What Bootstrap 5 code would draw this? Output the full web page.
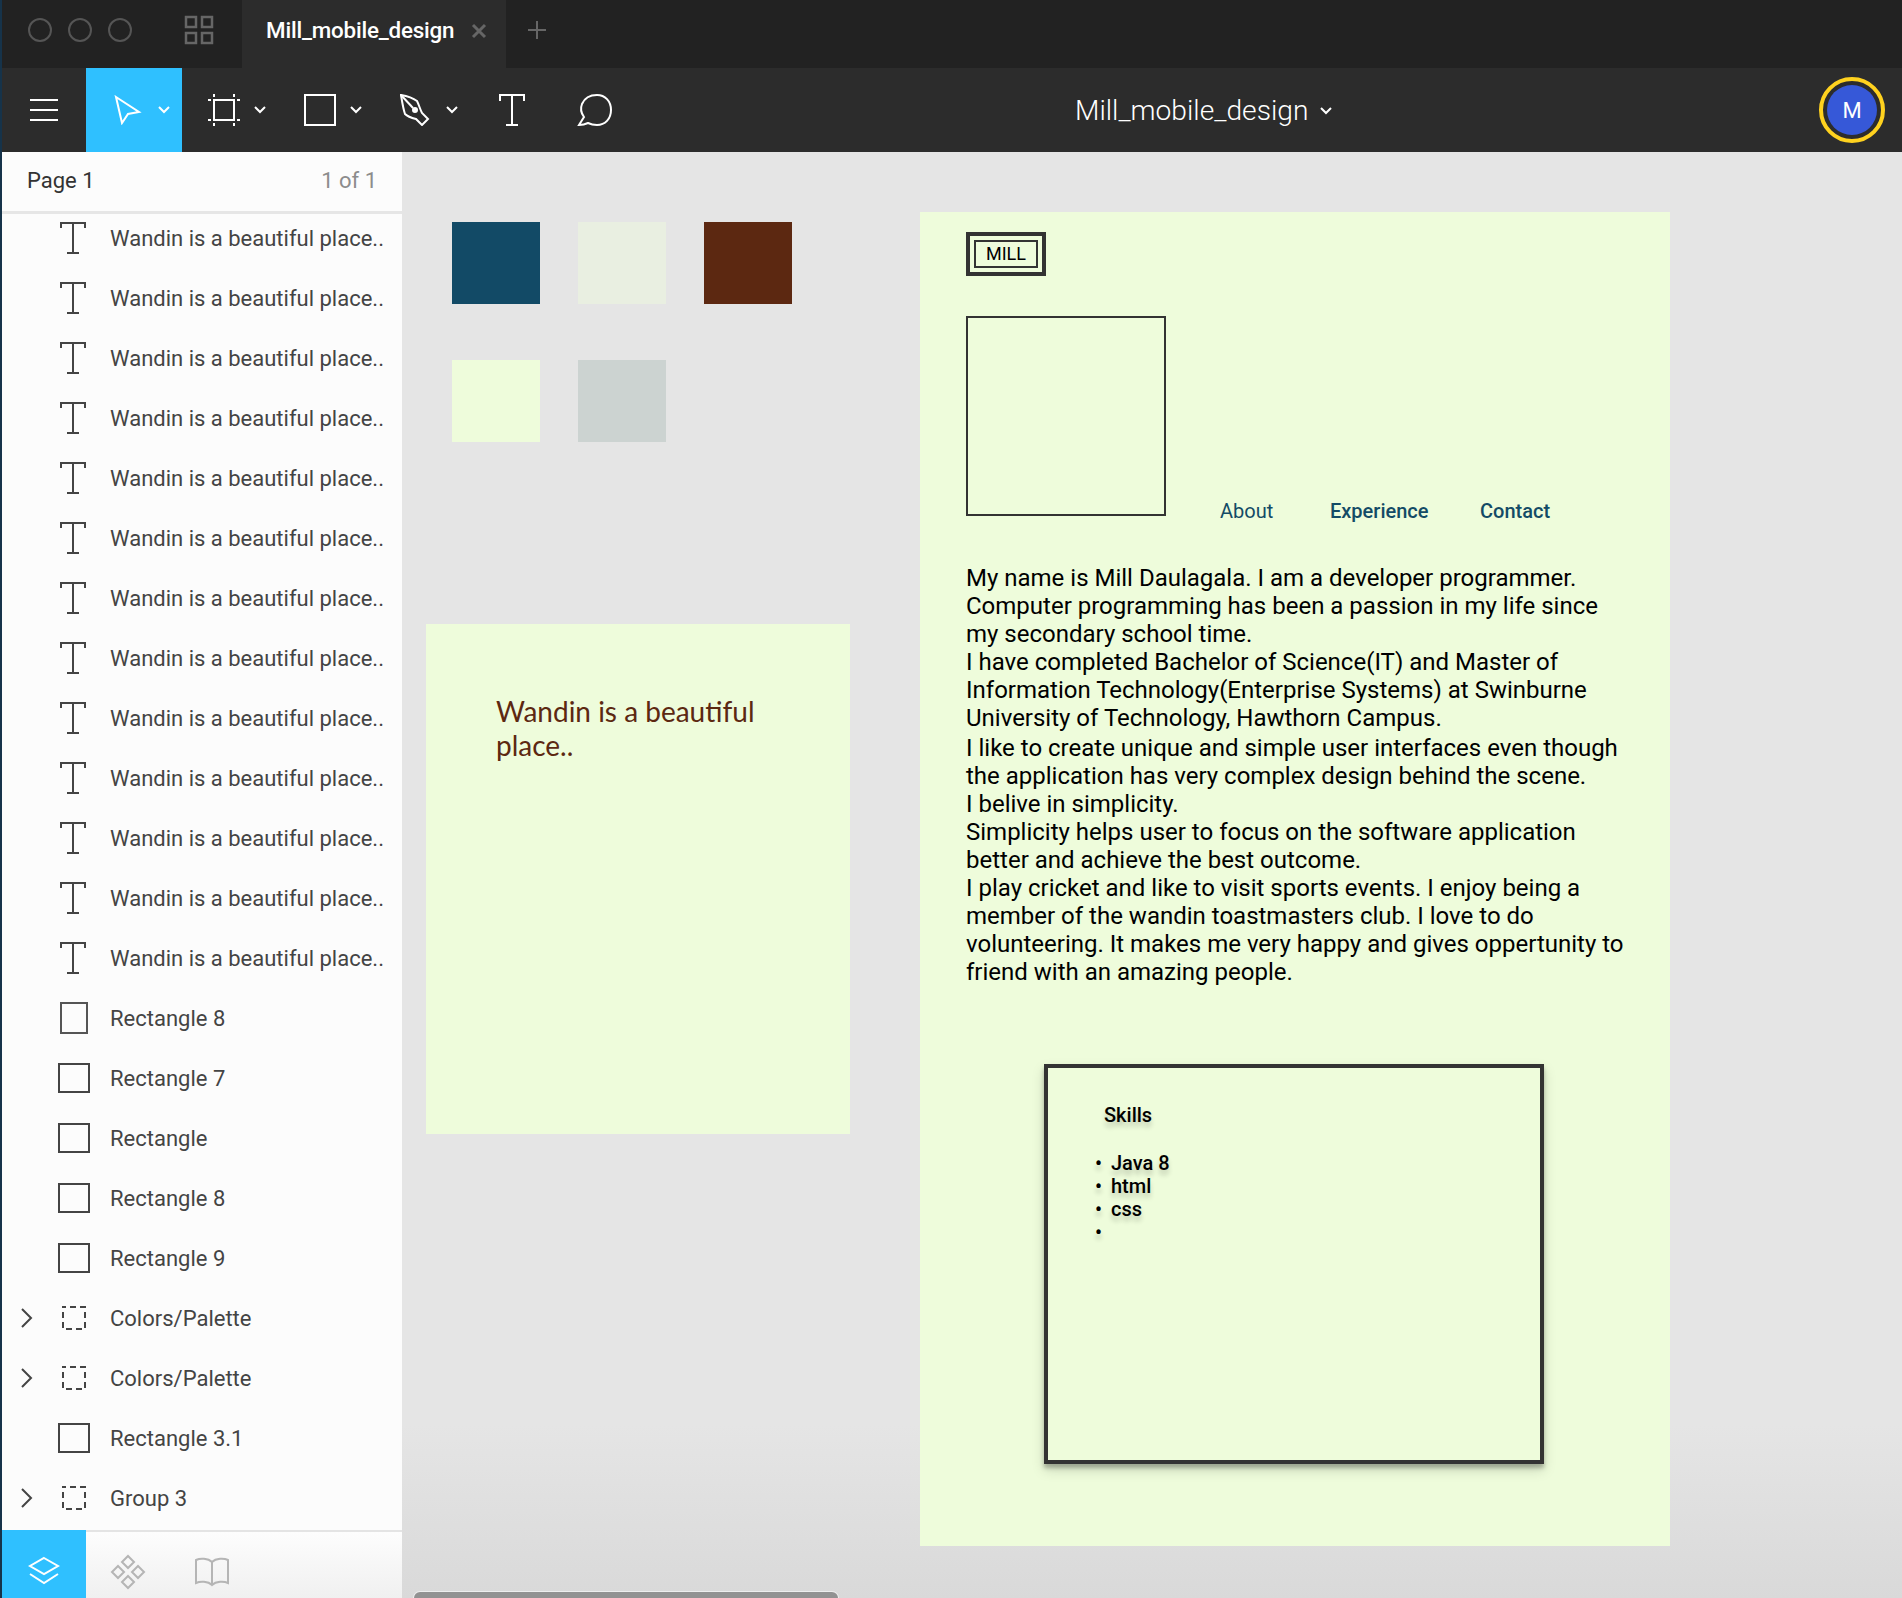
<!DOCTYPE html>
<html lang="en">
<head>
  <meta charset="UTF-8" />
  <title>Mill_mobile_design</title>
  <link href="https://cdn.jsdelivr.net/npm/bootstrap@5.3.2/dist/css/bootstrap.min.css" rel="stylesheet" />
  <style>
    html, body { height: 100%; }
    body { font-family: Roboto, sans-serif; background: #222; overflow: hidden; }
    svg { display: block; flex: none; }
    .app-shell { width: 1902px; height: 1598px; border-left: 2px solid #16334a; }

    .tab-strip { height: 68px; background: #222; }
    .lights { padding-left: 26px; width: 182px; gap: 16px; padding-bottom: 8px; }
    .grid-btn { width: 58px; padding-bottom: 8px; }
    .file-tab { width: 264px; background: #2c2c2c; padding: 0 0 6px 24px; color: #fff; font-size: 22.4px; font-weight: 500; letter-spacing: -.2px; }
    .file-tab svg { margin-left: 17px; }
    .add-tab { margin-left: 22px; margin-bottom: 8px; }

    .tool-bar { height: 84px; background: #2c2c2c; position: relative; }
    .tool-btn { height: 84px; }
    .menu-btn { width: 84px; padding-left: 28px; }
    .move-btn { width: 96px; background: #2fc0ff; padding-left: 28px; gap: 16px; }
    .tool-frame { margin-left: 26px; gap: 14px; }
    .tool-rect { margin-left: 38px; gap: 14px; }
    .tool-pen { margin-left: 38px; gap: 14px; }
    .tool-text { margin-left: 40px; }
    .tool-talk { margin-left: 51px; }
    .file-title { position: absolute; left: 1073px; top: 1px; height: 84px; color: #fff; font-size: 28.2px; font-weight: 300; gap: 12px; }
    .avatar-ring { position: absolute; right: 17px; top: 9px; width: 66px; height: 66px; border: 4px solid #ffd21f; border-radius: 50%; padding: 4px; }
    .avatar-dot { width: 100%; height: 100%; border-radius: 50%; background: #3658d8; color: #fff; font-size: 22px; }

    .work-area { height: 1446px; }
    .side-panel { width: 400px; background: #fcfcfc; color: #444; }
    .page-row { height: 62px; padding: 0 25px 2px 25px; border-bottom: 3px solid #e6e6e6; font-size: 22px; color: #333; }
    .page-count { color: #8c8c8c; }
    .layer-list { margin-top: -6px; }
    .layer-row { height: 60px; font-size: 22px; }
    .layer-caret { width: 56px; padding-left: 18px; }
    .layer-icon { width: 52px; }
    .icon-text { padding-left: 1px; }
    .icon-thin { padding-left: 2px; }
    .icon-dash { padding-left: 4px; }
    .side-tabs { height: 68px; border-top: 2px solid #e4e4e4; background: linear-gradient(#fdfdfd, #f0f0f0); }
    .side-tab { width: 84px; padding-top: 14px; }
    .side-tab-on { background: #2fc0ff; margin-top: -2px; }

    .canvas-area { background: linear-gradient(#e5e5e5 0, #e5e5e5 88%, #d9d9d9 100%); position: relative; overflow: hidden; }
    .swatch-group { position: absolute; left: 50px; top: 70px; display: grid; grid-template-columns: repeat(3, 88px); grid-auto-rows: 82px; gap: 56px 38px; }
    .swatch-item { width: 88px; }
    .note-frame { position: absolute; left: 24px; top: 472px; width: 424px; height: 510px; background: #eefcdb; padding: 70px 70px; color: #5c2811; font-family: Lato, sans-serif; font-size: 28px; line-height: 34px; }
    .page-frame { position: absolute; left: 518px; top: 60px; width: 750px; height: 1334px; background: #eefcdb; padding: 20px 46px; color: #000; }
    .logo-outer { width: 80px; height: 44px; border: 4px solid #333; padding: 4px; }
    .logo-inner { width: 100%; height: 100%; border: 2px solid #333; font-size: 18px; line-height: 1; }
    .hero-row { margin-top: 40px; }
    .photo-box { width: 200px; height: 200px; border: 2px solid #333; }
    .link-row { padding-left: 54px; color: #134b66; font-size: 20px; line-height: 24px; margin-bottom: -7px; }
    .link-row a { color: inherit; text-decoration: none; }
    .link-about { width: 110px; }
    .link-exp { font-weight: 500; width: 150px; }
    .link-contact { font-weight: 500; }
    .about-text { margin: 0; font-size: 24px; line-height: 28px; white-space: nowrap; }
    .about-first { margin-top: 48px; }
    .about-rest { margin-top: 2px; }
    .skills-box { margin: 78px 0 0 78px; width: 500px; height: 400px; border: 4px solid #333; box-shadow: 0 4px 4px rgba(0,0,0,.25), 0 6px 12px rgba(0,0,0,.15); padding: 35px 0 0 56px; font-size: 20px; font-weight: 500; text-shadow: 0 5px 5px rgba(0,0,0,.2); }
    .skills-title { line-height: 24px; }
    .skills-list { list-style: none; margin: 25px 0 0 -9px; padding: 0; font-size: 20px; line-height: 23px; }
    .skills-list li { padding-left: 16px; height: 23px; position: relative; }
    .skills-list li::before { content: "•"; position: absolute; left: 0; }
    .scroll-thumb { position: absolute; left: 12px; bottom: 0; width: 424px; height: 6px; background: #929292; border-radius: 6px 6px 0 0; box-shadow: 0 0 0 1px #eee; }
  </style>
</head>
<body>
  <div class="app-shell d-flex flex-column">

    <div class="tab-strip d-flex align-items-center">
      <div class="lights d-flex align-items-center">
        <svg width="24" height="24" fill="none" stroke="#555" stroke-width="2"><circle cx="12" cy="12" r="11"/></svg>
        <svg width="24" height="24" fill="none" stroke="#555" stroke-width="2"><circle cx="12" cy="12" r="11"/></svg>
        <svg width="24" height="24" fill="none" stroke="#555" stroke-width="2"><circle cx="12" cy="12" r="11"/></svg>
      </div>
      <div class="grid-btn d-flex">
        <svg width="30" height="30" fill="none" stroke="#666" stroke-width="2.5"><rect x="2" y="2" width="10" height="10"/><rect x="18" y="2" width="10" height="10"/><rect x="2" y="18" width="10" height="10"/><rect x="18" y="18" width="10" height="10"/></svg>
      </div>
      <div class="file-tab d-flex align-items-center align-self-stretch">
        <span>Mill_mobile_design</span>
        <svg width="16" height="16" stroke="#666" stroke-width="3"><path d="M2 2l12 12M14 2L2 14"/></svg>
      </div>
      <svg class="add-tab" width="18" height="18" stroke="#666" stroke-width="2"><path d="M9 0v18M0 9h18"/></svg>
    </div>

    <div class="tool-bar d-flex align-items-center">
      <div class="tool-btn menu-btn d-flex align-items-center">
        <svg width="30" height="24" stroke="#fff" stroke-width="2"><path d="M0 2h28M0 12h28M0 22h28"/></svg>
      </div>
      <div class="tool-btn move-btn d-flex align-items-center">
        <svg width="28" height="30" fill="none" stroke="#fff" stroke-width="2"><path d="M2 2l23 15-11 2-6 9z"/></svg>
        <svg width="12" height="8" fill="none" stroke="#fff" stroke-width="2"><path d="M1 1l5 5 5-5"/></svg>
      </div>
      <div class="tool-frame d-flex align-items-center">
        <svg width="32" height="32" fill="none" stroke="#fff" stroke-width="2"><rect x="6" y="6" width="20" height="20"/><path d="M0 6h3M29 6h3M0 26h3M29 26h3M6 0v3M26 0v3M6 29v3M26 29v3"/></svg>
        <svg width="12" height="8" fill="none" stroke="#fff" stroke-width="2"><path d="M1 1l5 5 5-5"/></svg>
      </div>
      <div class="tool-rect d-flex align-items-center">
        <svg width="32" height="32" fill="none" stroke="#fff" stroke-width="2"><rect x="1" y="1" width="30" height="30"/></svg>
        <svg width="12" height="8" fill="none" stroke="#fff" stroke-width="2"><path d="M1 1l5 5 5-5"/></svg>
      </div>
      <div class="tool-pen d-flex align-items-center">
        <svg width="32" height="32" fill="none" stroke="#fff" stroke-width="2"><path d="M1 1c6 1 12 3 16 6 2 4 3 8 5 12l6 6-6 6-6-6c-4-1-8-2-11-5C3 14 2 7 1 1z"/><path d="M1 1l12 13"/><circle cx="15" cy="16" r="2" fill="#fff"/></svg>
        <svg width="12" height="8" fill="none" stroke="#fff" stroke-width="2"><path d="M1 1l5 5 5-5"/></svg>
      </div>
      <svg class="tool-text" width="28" height="32" fill="none" stroke="#fff" stroke-width="2"><path d="M2 7V1h24v6M14 1v30M8 31h12"/></svg>
      <svg class="tool-talk" width="36" height="32" fill="none" stroke="#fff" stroke-width="2"><path d="M2 31l5-8C4 19 3 15 5 10 8 3 14 1 20 1c8 0 14 6 14 15s-6 15-14 15c-4 0-7-1-9-2-2 1-6 2-9 2z"/></svg>
      <div class="file-title d-flex align-items-center">
        <span>Mill_mobile_design</span>
        <svg width="12" height="8" fill="none" stroke="#fff" stroke-width="2"><path d="M1 1l5 5 5-5"/></svg>
      </div>
      <div class="avatar-ring">
        <div class="avatar-dot d-flex align-items-center justify-content-center">M</div>
      </div>
    </div>

    <div class="work-area d-flex">
      <aside class="side-panel d-flex flex-column">
        <div class="page-row d-flex align-items-center justify-content-between">
          <span>Page 1</span><span class="page-count">1 of 1</span>
        </div>
        <div class="layer-list flex-grow-1" id="layerList"></div>
        <div class="side-tabs d-flex">
          <div class="side-tab side-tab-on d-flex align-items-center justify-content-center">
            <svg width="32" height="30" fill="none" stroke="#fff" stroke-width="2"><path d="M16 2l14 8-14 8-14-8z"/><path d="M2 18l14 9 14-9"/></svg>
          </div>
          <div class="side-tab d-flex align-items-center justify-content-center">
            <svg width="36" height="36" fill="none" stroke="#b5b5b5" stroke-width="2"><path d="M18 2l6 6-6 6-6-6zM18 22l6 6-6 6-6-6zM8 12l6 6-6 6-6-6zM28 12l6 6-6 6-6-6z"/></svg>
          </div>
          <div class="side-tab d-flex align-items-center justify-content-center">
            <svg width="36" height="30" fill="none" stroke="#b5b5b5" stroke-width="2"><path d="M18 5C14 1 6 1 2 3v23c4-2 12-2 16 2 4-4 12-4 16-2V3c-4-2-12-2-16 2zM18 5v23"/></svg>
          </div>
        </div>
      </aside>

      <main class="canvas-area flex-grow-1">
        <div class="swatch-group">
          <div class="swatch-item" style="background:#124a66"></div>
          <div class="swatch-item" style="background:#e9efe1"></div>
          <div class="swatch-item" style="background:#5c2811"></div>
          <div class="swatch-item" style="background:#eefcdb"></div>
          <div class="swatch-item" style="background:#ccd3d1"></div>
        </div>

        <div class="note-frame">Wandin is a beautiful<br>place..</div>

        <section class="page-frame">
          <div class="logo-outer">
            <div class="logo-inner d-flex align-items-center justify-content-center">MILL</div>
          </div>
          <div class="hero-row d-flex align-items-end">
            <div class="photo-box"></div>
            <nav class="link-row d-flex">
              <a class="link-about" href="#">About</a>
              <a class="link-exp" href="#">Experience</a>
              <a class="link-contact" href="#">Contact</a>
            </nav>
          </div>
          <p class="about-text about-first">My name is Mill Daulagala. I am a developer programmer.<br>Computer programming has been a passion in my life since<br>my secondary school time.<br>I have completed Bachelor of Science(IT) and Master of<br>Information Technology(Enterprise Systems) at Swinburne<br>University of Technology, Hawthorn Campus.</p>
          <p class="about-text about-rest">I like to create unique and simple user interfaces even though<br>the application has very complex design behind the scene.<br>I belive in simplicity.<br>Simplicity helps user to focus on the software application<br>better and achieve the best outcome.<br>I play cricket and like to visit sports events. I enjoy being a<br>member of the wandin toastmasters club. I love to do<br>volunteering. It makes me very happy and gives oppertunity to<br>friend with an amazing people.</p>
          <div class="skills-box">
            <div class="skills-title">Skills</div>
            <ul class="skills-list">
              <li>Java 8</li>
              <li>html</li>
              <li>css</li>
              <li></li>
            </ul>
          </div>
        </section>

        <div class="scroll-thumb"></div>
      </main>
    </div>
  </div>

  <script src="https://cdn.jsdelivr.net/npm/bootstrap@5.3.2/dist/js/bootstrap.bundle.min.js"></script>
  <script>
    const tIcon = '<svg width="28" height="34" fill="none" stroke="#444" stroke-width="2"><path d="M2 7V2h24v5M14 2v30M8 32h12"/></svg>';
    const rectIcon = '<svg width="32" height="30" fill="none" stroke="#444" stroke-width="2"><rect x="1" y="1" width="30" height="28"/></svg>';
    const thinRect = '<svg width="28" height="32" fill="none" stroke="#555" stroke-width="2"><rect x="1" y="1" width="26" height="30"/></svg>';
    const groupIcon = '<svg width="24" height="24" fill="none" stroke="#444" stroke-width="2" stroke-dasharray="6 4" stroke-dashoffset="3"><rect x="1" y="1" width="22" height="22"/></svg>';
    const caret = '<svg width="14" height="22" fill="none" stroke="#444" stroke-width="2"><path d="M2 2l9 9-9 9"/></svg>';

    const layers = [];
    for (let i = 0; i < 13; i++) layers.push({ name: "Wandin is a beautiful place..", icon: tIcon, kind: "icon-text" });
    layers.push({ name: "Rectangle 8", icon: thinRect, kind: "icon-thin" });
    layers.push({ name: "Rectangle 7", icon: rectIcon });
    layers.push({ name: "Rectangle", icon: rectIcon });
    layers.push({ name: "Rectangle 8", icon: rectIcon });
    layers.push({ name: "Rectangle 9", icon: rectIcon });
    layers.push({ name: "Colors/Palette", icon: groupIcon, kind: "icon-dash", open: true });
    layers.push({ name: "Colors/Palette", icon: groupIcon, kind: "icon-dash", open: true });
    layers.push({ name: "Rectangle 3.1", icon: rectIcon });
    layers.push({ name: "Group 3", icon: groupIcon, kind: "icon-dash", open: true });

    document.getElementById("layerList").innerHTML = layers.map(l => `
      <div class="layer-row d-flex align-items-center">
        <div class="layer-caret">${l.open ? caret : ""}</div>
        <div class="layer-icon ${l.kind || ""}">${l.icon}</div>
        <span>${l.name}</span>
      </div>`).join("");
  </script>
</body>
</html>
